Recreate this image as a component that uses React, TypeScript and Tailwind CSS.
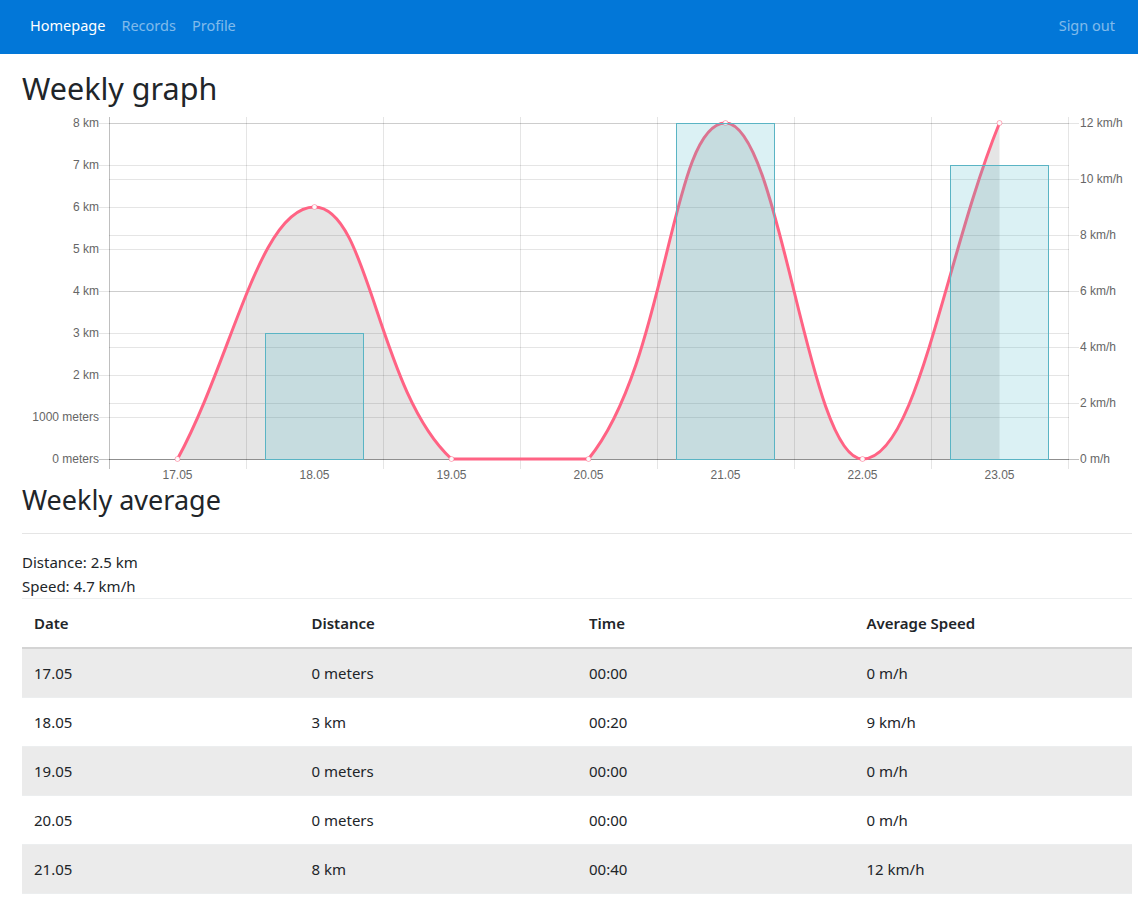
import React from 'react';

interface DayProps {
    date: string;
    km: number;
    time: string;
    speed: number;
}

const days: DayProps[] = [
    {date: '17.05', km: 0, time: '00:00', speed: 0},
    {date: '18.05', km: 3, time: '00:20', speed: 9},
    {date: '19.05', km: 0, time: '00:00', speed: 0},
    {date: '20.05', km: 0, time: '00:00', speed: 0},
    {date: '21.05', km: 8, time: '00:40', speed: 12},
    {date: '22.05', km: 0, time: '00:00', speed: 0},
    {date: '23.05', km: 7, time: '00:35', speed: 12},
];

const fmtDistance = (km: number) => (km === 0 ? '0 meters' : `${km} km`);
const fmtSpeed = (v: number) => (v === 0 ? '0 m/h' : `${v} km/h`);

// chart area in page coordinates
const LEFT = 109;
const RIGHT = 1068;
const TOP = 123;
const BOTTOM = 459;
const STEP = (RIGHT - LEFT) / days.length;
const PINK = 'rgb(255,99,132)';
const FONT = '"Liberation Sans", Arial, sans-serif';

const xAt = (i: number) => LEFT + STEP * (i + 0.5);
const yKm = (v: number) => BOTTOM - v * 42;
const ySpeed = (v: number) => BOTTOM - v * 28;

type Pt = {x: number; y: number};
const clamp = (v: number, a: number, b: number) => Math.max(a, Math.min(b, v));

//same spline as chart.js, tension 0.4, control points capped to the area
const splinePath = (pts: Pt[]) => {
    const t = 0.4;
    const cps = pts.map((cur, i) => {
        const prev = pts[i - 1] || cur;
        const next = pts[i + 1] || cur;
        const d01 = Math.hypot(cur.x - prev.x, cur.y - prev.y);
        const d12 = Math.hypot(next.x - cur.x, next.y - cur.y);
        const s01 = d01 / (d01 + d12) || 0;
        const s12 = d12 / (d01 + d12) || 0;
        const fa = t * s01;
        const fb = t * s12;
        const cap = (p: Pt) => ({x: clamp(p.x, LEFT, RIGHT), y: clamp(p.y, TOP, BOTTOM)});
        return {
            prev: cap({x: cur.x - fa * (next.x - prev.x), y: cur.y - fa * (next.y - prev.y)}),
            next: cap({x: cur.x + fb * (next.x - prev.x), y: cur.y + fb * (next.y - prev.y)}),
        };
    });
    let d = `M${pts[0].x},${pts[0].y}`;
    for (let i = 1; i < pts.length; i++) {
        const a = cps[i - 1].next;
        const b = cps[i].prev;
        d += ` C${a.x},${a.y} ${b.x},${b.y} ${pts[i].x},${pts[i].y}`;
    }
    return d;
};

const WeeklyChart = () => {
    const pts = days.map((d, i) => ({x: xAt(i), y: ySpeed(d.speed)}));
    const line = splinePath(pts);
    const area = `${line} L${pts[pts.length - 1].x},${BOTTOM} L${pts[0].x},${BOTTOM} Z`;
    const kmTicks = [0, 1, 2, 3, 4, 5, 6, 7, 8];
    const speedTicks = [0, 2, 4, 6, 8, 10, 12];

    return (
        <svg
            width={1110}
            height={375}
            viewBox="22 109 1110 375"
            className="block mt-[3px]"
        >
            {/* horizontal grid, left axis */}
            {kmTicks.map((v) => (
                <line
                    key={'k' + v}
                    x1={LEFT - 10}
                    x2={RIGHT + 1}
                    y1={yKm(v) + 0.5}
                    y2={yKm(v) + 0.5}
                    stroke={v === 0 ? 'rgba(0,0,0,0.25)' : 'rgba(0,0,0,0.1)'}
                />
            ))}
            {/* horizontal grid, right axis */}
            {speedTicks.map((v) => (
                <line
                    key={'s' + v}
                    x1={LEFT}
                    x2={RIGHT + 11}
                    y1={ySpeed(v) + 0.5}
                    y2={ySpeed(v) + 0.5}
                    stroke={v === 0 ? 'rgba(0,0,0,0.25)' : 'rgba(0,0,0,0.1)'}
                />
            ))}
            {/* vertical grid */}
            {days.concat([days[0]]).map((_, i) => (
                <line
                    key={'v' + i}
                    x1={LEFT + STEP * i + 0.5}
                    x2={LEFT + STEP * i + 0.5}
                    y1={117}
                    y2={469}
                    stroke={i === 0 ? 'rgba(0,0,0,0.25)' : 'rgba(0,0,0,0.1)'}
                />
            ))}

            {/* speed line */}
            <path d={area} fill="rgba(0,0,0,0.1)" />
            <path d={line} fill="none" stroke={PINK} strokeWidth={3} />
            {pts.map((p, i) => (
                <circle key={'p' + i} cx={p.x} cy={p.y} r={2.5} fill="#fbfbfb" stroke="rgba(255,99,132,0.5)" strokeWidth={1} />
            ))}

            {/* distance bars */}
            {days.map((d, i) => (
                <rect
                    key={'b' + i}
                    x={xAt(i) - 49}
                    y={yKm(d.km) + 0.5}
                    width={98}
                    height={BOTTOM - yKm(d.km)}
                    fill="rgba(75,185,200,0.2)"
                    stroke="rgb(90,180,196)"
                    strokeWidth={1}
                />
            ))}

            {/* labels */}
            {kmTicks.map((v) => (
                <text
                    key={'lk' + v}
                    x={LEFT - 10}
                    y={yKm(v) + 4}
                    textAnchor="end"
                    fontSize={12}
                    fill="#666"
                    fontFamily={FONT}
                >
                    {v === 0 ? '0 meters' : v === 1 ? '1000 meters' : `${v} km`}
                </text>
            ))}
            {speedTicks.map((v) => (
                <text
                    key={'ls' + v}
                    x={RIGHT + 12}
                    y={ySpeed(v) + 4}
                    fontSize={12}
                    fill="#666"
                    fontFamily={FONT}
                >
                    {fmtSpeed(v)}
                </text>
            ))}
            {days.map((d, i) => (
                <text
                    key={'lx' + i}
                    x={xAt(i)}
                    y={479}
                    textAnchor="middle"
                    fontSize={12}
                    fill="#666"
                    fontFamily={FONT}
                >
                    {d.date}
                </text>
            ))}
        </svg>
    );
};

export default function App() {
    return (
        <div className="min-h-screen bg-white text-[#212529] font-['Noto_Sans',sans-serif]">
            <nav className="h-[54px] bg-[#0277d8] flex items-center justify-between pl-[22px] pr-[15px] pb-[3px] text-[14.5px]">
                <div className="flex">
                    <a href="#" className="px-2 text-white">Homepage</a>
                    <a href="#" className="px-2 text-white/50">Records</a>
                    <a href="#" className="px-2 text-white/50">Profile</a>
                </div>
                <a href="#" className="px-2 text-white/50">Sign out</a>
            </nav>

            <div className="pl-[22px] pr-[6px]">
                <h1 className="mt-4 text-[30.5px] leading-[36px] font-normal">Weekly graph</h1>
                <WeeklyChart />

                <h2 className="text-[27px] leading-[32px] font-normal">Weekly average</h2>
                <hr className="mt-[17px] border-t border-[#e5e5e5]" />
                <div className="mt-4 text-[15px] leading-6">
                    <p>Distance: 2.5 km</p>
                    <p>Speed: 4.7 km/h</p>
                </div>

                <table className="w-full text-left text-[15px] leading-6 table-fixed border-collapse">
                    <thead>
                        <tr>
                            <th className="p-3 border-t border-[#eceeef] border-b-2 border-b-[#d4d4d4] font-semibold">Date</th>
                            <th className="p-3 border-t border-[#eceeef] border-b-2 border-b-[#d4d4d4] font-semibold">Distance</th>
                            <th className="p-3 border-t border-[#eceeef] border-b-2 border-b-[#d4d4d4] font-semibold">Time</th>
                            <th className="p-3 border-t border-[#eceeef] border-b-2 border-b-[#d4d4d4] font-semibold">Average Speed</th>
                        </tr>
                    </thead>
                    <tbody>
                        {days.map((d) => (
                            <tr key={d.date} className="odd:bg-[#ebebeb] border-t border-[#eceeef]">
                                <td className="p-3">{d.date}</td>
                                <td className="p-3">{fmtDistance(d.km)}</td>
                                <td className="p-3">{d.time}</td>
                                <td className="p-3">{fmtSpeed(d.speed)}</td>
                            </tr>
                        ))}
                    </tbody>
                </table>
            </div>
        </div>
    );
}
